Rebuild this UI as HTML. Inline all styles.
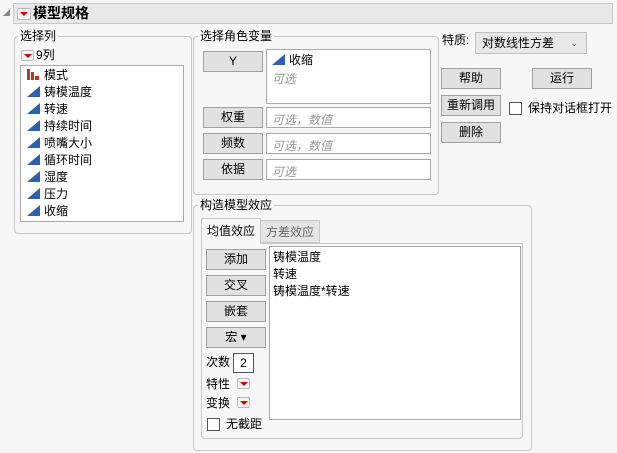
<!DOCTYPE html><html><head><meta charset="utf-8"><style>
body{margin:0;width:617px;height:453px;background:#f7f7f7;font-family:"Liberation Sans","Noto Sans CJK SC",sans-serif;font-size:12px;color:#000;position:relative;overflow:hidden}
.a{position:absolute}
.grp{position:absolute;border:1px solid #c8c8c8;border-radius:4px}
.lbl{position:absolute;background:#f7f7f7;padding:0 2px;font-size:12px;line-height:14px}
.btn{position:absolute;background:#e1e1e1;border:1px solid #a0a0a0;box-sizing:border-box;text-align:center;line-height:18px;font-size:12px}
.box{position:absolute;background:#fff;border:1px solid #a8a8a8;box-sizing:border-box}
.ph{color:#999;font-style:italic;font-size:12px}
.red{position:absolute;width:13px;height:11px;border:1px solid #bbb;border-radius:2px;background:#f3f3f3;box-sizing:border-box}
.red:after{content:"";position:absolute;left:2px;top:3px;border-left:4px solid transparent;border-right:4px solid transparent;border-top:4px solid #c00}
.tri{display:inline-block;width:0;height:0;border-left:13px solid transparent;border-bottom:11px solid #2f5fb0;vertical-align:-1px;margin-right:4px}
.row{position:absolute;left:6px;line-height:17px}
.chk{position:absolute;width:13px;height:13px;background:#fff;border:1px solid #333;box-sizing:border-box}
</style></head><body>
<div class="a" style="left:3px;top:9px;width:0;height:0;border-left:7px solid transparent;border-bottom:7px solid #888"></div>
<div class="a" style="left:13px;top:3px;width:600px;height:21px;background:#e8e8e8;border:1px solid #c8c8c8;box-sizing:border-box"></div>
<div class="red" style="left:17px;top:8px;width:14px;height:12px"></div>
<div class="a" style="left:33px;top:4px;font-weight:bold;font-size:14px;line-height:19px">模型规格</div>

<div class="grp" style="left:14px;top:36px;width:176px;height:196px"></div>
<div class="lbl" style="left:18px;top:29px">选择列</div>
<div class="red" style="left:21px;top:50px"></div>
<div class="a" style="left:36px;top:48px;line-height:15px">9列</div>
<div class="box" style="left:20px;top:65px;width:164px;height:157px">
<div class="row" style="top:1px"><span style="display:inline-block;width:13px;height:11px;position:relative;vertical-align:-1px;margin-right:4px"><i style="position:absolute;left:0;bottom:0;width:3px;height:11px;background:#c0361a"></i><i style="position:absolute;left:4px;bottom:0;width:3px;height:8px;background:#c0361a"></i><i style="position:absolute;left:8px;bottom:0;width:4px;height:4px;background:#c0361a"></i></span>模式</div>
<div class="row" style="top:18px"><span class="tri"></span>铸模温度</div>
<div class="row" style="top:35px"><span class="tri"></span>转速</div>
<div class="row" style="top:52px"><span class="tri"></span>持续时间</div>
<div class="row" style="top:69px"><span class="tri"></span>喷嘴大小</div>
<div class="row" style="top:86px"><span class="tri"></span>循环时间</div>
<div class="row" style="top:103px"><span class="tri"></span>湿度</div>
<div class="row" style="top:120px"><span class="tri"></span>压力</div>
<div class="row" style="top:137px"><span class="tri"></span>收缩</div>
</div>

<div class="grp" style="left:193px;top:36px;width:244px;height:157px"></div>
<div class="lbl" style="left:198px;top:29px">选择角色变量</div>
<div class="btn" style="left:203px;top:51px;width:60px;height:21px">Y</div>
<div class="box" style="left:266px;top:49px;width:165px;height:55px"><div style="position:absolute;left:5px;top:2px;line-height:16px"><span class="tri"></span>收缩</div><div class="ph" style="position:absolute;left:5px;top:20px">可选</div></div>
<div class="btn" style="left:203px;top:107px;width:60px;height:21px">权重</div>
<div class="box" style="left:266px;top:107px;width:165px;height:21px"><span class="ph" style="position:absolute;left:5px;top:3px">可选，数值</span></div>
<div class="btn" style="left:203px;top:133px;width:60px;height:21px">频数</div>
<div class="box" style="left:266px;top:133px;width:165px;height:21px"><span class="ph" style="position:absolute;left:5px;top:3px">可选，数值</span></div>
<div class="btn" style="left:203px;top:159px;width:60px;height:21px">依据</div>
<div class="box" style="left:266px;top:159px;width:165px;height:21px"><span class="ph" style="position:absolute;left:5px;top:3px">可选</span></div>

<div class="a" style="left:442px;top:32px;line-height:16px">特质:</div>
<div class="a" style="left:475px;top:32px;width:112px;height:22px;background:#e8e8e8;border:1px solid #c0c0c0;box-sizing:border-box;line-height:20px;padding-left:6px">对数线性方差<span style="position:absolute;right:8px;top:0;font-size:9px;color:#666">⌄</span></div>
<div class="btn" style="left:441px;top:68px;width:60px;height:21px">帮助</div>
<div class="btn" style="left:532px;top:68px;width:60px;height:21px">运行</div>
<div class="btn" style="left:441px;top:95px;width:60px;height:21px">重新调用</div>
<div class="chk" style="left:509px;top:102px;border-color:#555"></div>
<div class="a" style="left:528px;top:100px;line-height:16px">保持对话框打开</div>
<div class="btn" style="left:441px;top:122px;width:60px;height:21px">删除</div>

<div class="grp" style="left:193px;top:205px;width:337px;height:244px"></div>
<div class="lbl" style="left:198px;top:198px">构造模型效应</div>
<div class="a" style="left:201px;top:243px;width:322px;height:196px;border:1px solid #c8c8c8;border-radius:0 0 4px 4px;box-sizing:border-box;background:#f7f7f7"></div>
<div class="a" style="left:201px;top:218px;width:60px;height:26px;background:#f7f7f7;border:1px solid #c8c8c8;border-bottom:none;box-sizing:border-box;text-align:center;line-height:24px">均值效应</div>
<div class="a" style="left:261px;top:220px;width:59px;height:23px;background:#e5e5e5;border:1px solid #c8c8c8;border-left:none;box-sizing:border-box;text-align:center;line-height:22px;color:#666">方差效应</div>
<div class="btn" style="left:206px;top:249px;width:60px;height:21px">添加</div>
<div class="btn" style="left:206px;top:275px;width:60px;height:21px">交叉</div>
<div class="btn" style="left:206px;top:301px;width:60px;height:21px">嵌套</div>
<div class="btn" style="left:206px;top:327px;width:60px;height:21px">宏 ▾</div>
<div class="box" style="left:269px;top:246px;width:252px;height:174px"><div style="position:absolute;left:3px;top:2px;line-height:17px">铸模温度<br>转速<br>铸模温度*转速</div></div>
<div class="a" style="left:206px;top:354px;line-height:16px">次数</div>
<div class="box" style="left:233px;top:353px;width:21px;height:20px;border-color:#555;text-align:center;line-height:18px">2</div>
<div class="a" style="left:206px;top:376px;line-height:16px">特性</div>
<div class="red" style="left:237px;top:378px"></div>
<div class="a" style="left:206px;top:395px;line-height:16px">变换</div>
<div class="red" style="left:237px;top:397px"></div>
<div class="chk" style="left:207px;top:418px;border-color:#555"></div>
<div class="a" style="left:226px;top:416px;line-height:16px">无截距</div>
</body></html>
